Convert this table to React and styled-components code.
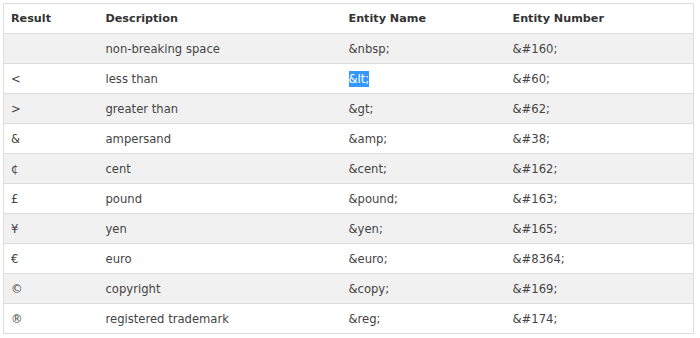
import React from 'react';
import styled, { createGlobalStyle } from 'styled-components';

const rows = [
  ['\u00a0', 'non-breaking space', '&nbsp;', '&#160;'],
  ['<', 'less than', '&lt;', '&#60;', true],
  ['>', 'greater than', '&gt;', '&#62;'],
  ['&', 'ampersand', '&amp;', '&#38;'],
  ['¢', 'cent', '&cent;', '&#162;'],
  ['£', 'pound', '&pound;', '&#163;'],
  ['¥', 'yen', '&yen;', '&#165;'],
  ['€', 'euro', '&euro;', '&#8364;'],
  ['©', 'copyright', '&copy;', '&#169;'],
  ['®', 'registered trademark', '&reg;', '&#174;'],
];

const GlobalStyle = createGlobalStyle`
  html, body {
    margin: 0;
    background: #fff;
  }
  body {
    padding: 3px;
    font-family: "DejaVu Sans", Verdana, sans-serif;
  }
`;

const Table = styled.table`
  width: 691px;
  table-layout: fixed;
  border-collapse: collapse;
  border: 1px solid #ddd;
  font-size: 11.6px;
  color: #444;
`;

const Row = styled.tr`
  border-bottom: 1px solid #ddd;
  background: ${p => (p.$shaded ? '#f1f1f1' : '#fff')};
`;

const Head = styled.th`
  text-align: left;
  font-weight: bold;
  font-size: 11.2px;
  color: #333;
  height: 29px;
  padding: 0 0 0 7px;
`;

const Cell = styled.td`
  height: 29px;
  padding: 0 0 0 7px;
  white-space: nowrap;
`;

const Selected = styled.span`
  background: #3399ff;
  color: #fff;
  padding: 1px 0;
`;

export default function App() {
  return (
    <>
      <GlobalStyle />
      <Table>
        <colgroup>
          <col style={{ width: 95 }} />
          <col style={{ width: 243 }} />
          <col style={{ width: 164 }} />
          <col />
        </colgroup>
        <thead>
          <Row>
            <Head>Result</Head>
            <Head>Description</Head>
            <Head>Entity Name</Head>
            <Head>Entity Number</Head>
          </Row>
        </thead>
        <tbody>
          {rows.map((r, i) => (
            <Row key={r[1]} $shaded={i % 2 === 0}>
              <Cell>{r[0]}</Cell>
              <Cell>{r[1]}</Cell>
              <Cell>{r[4] ? <Selected>{r[2]}</Selected> : r[2]}</Cell>
              <Cell>{r[3]}</Cell>
            </Row>
          ))}
        </tbody>
      </Table>
    </>
  );
}
